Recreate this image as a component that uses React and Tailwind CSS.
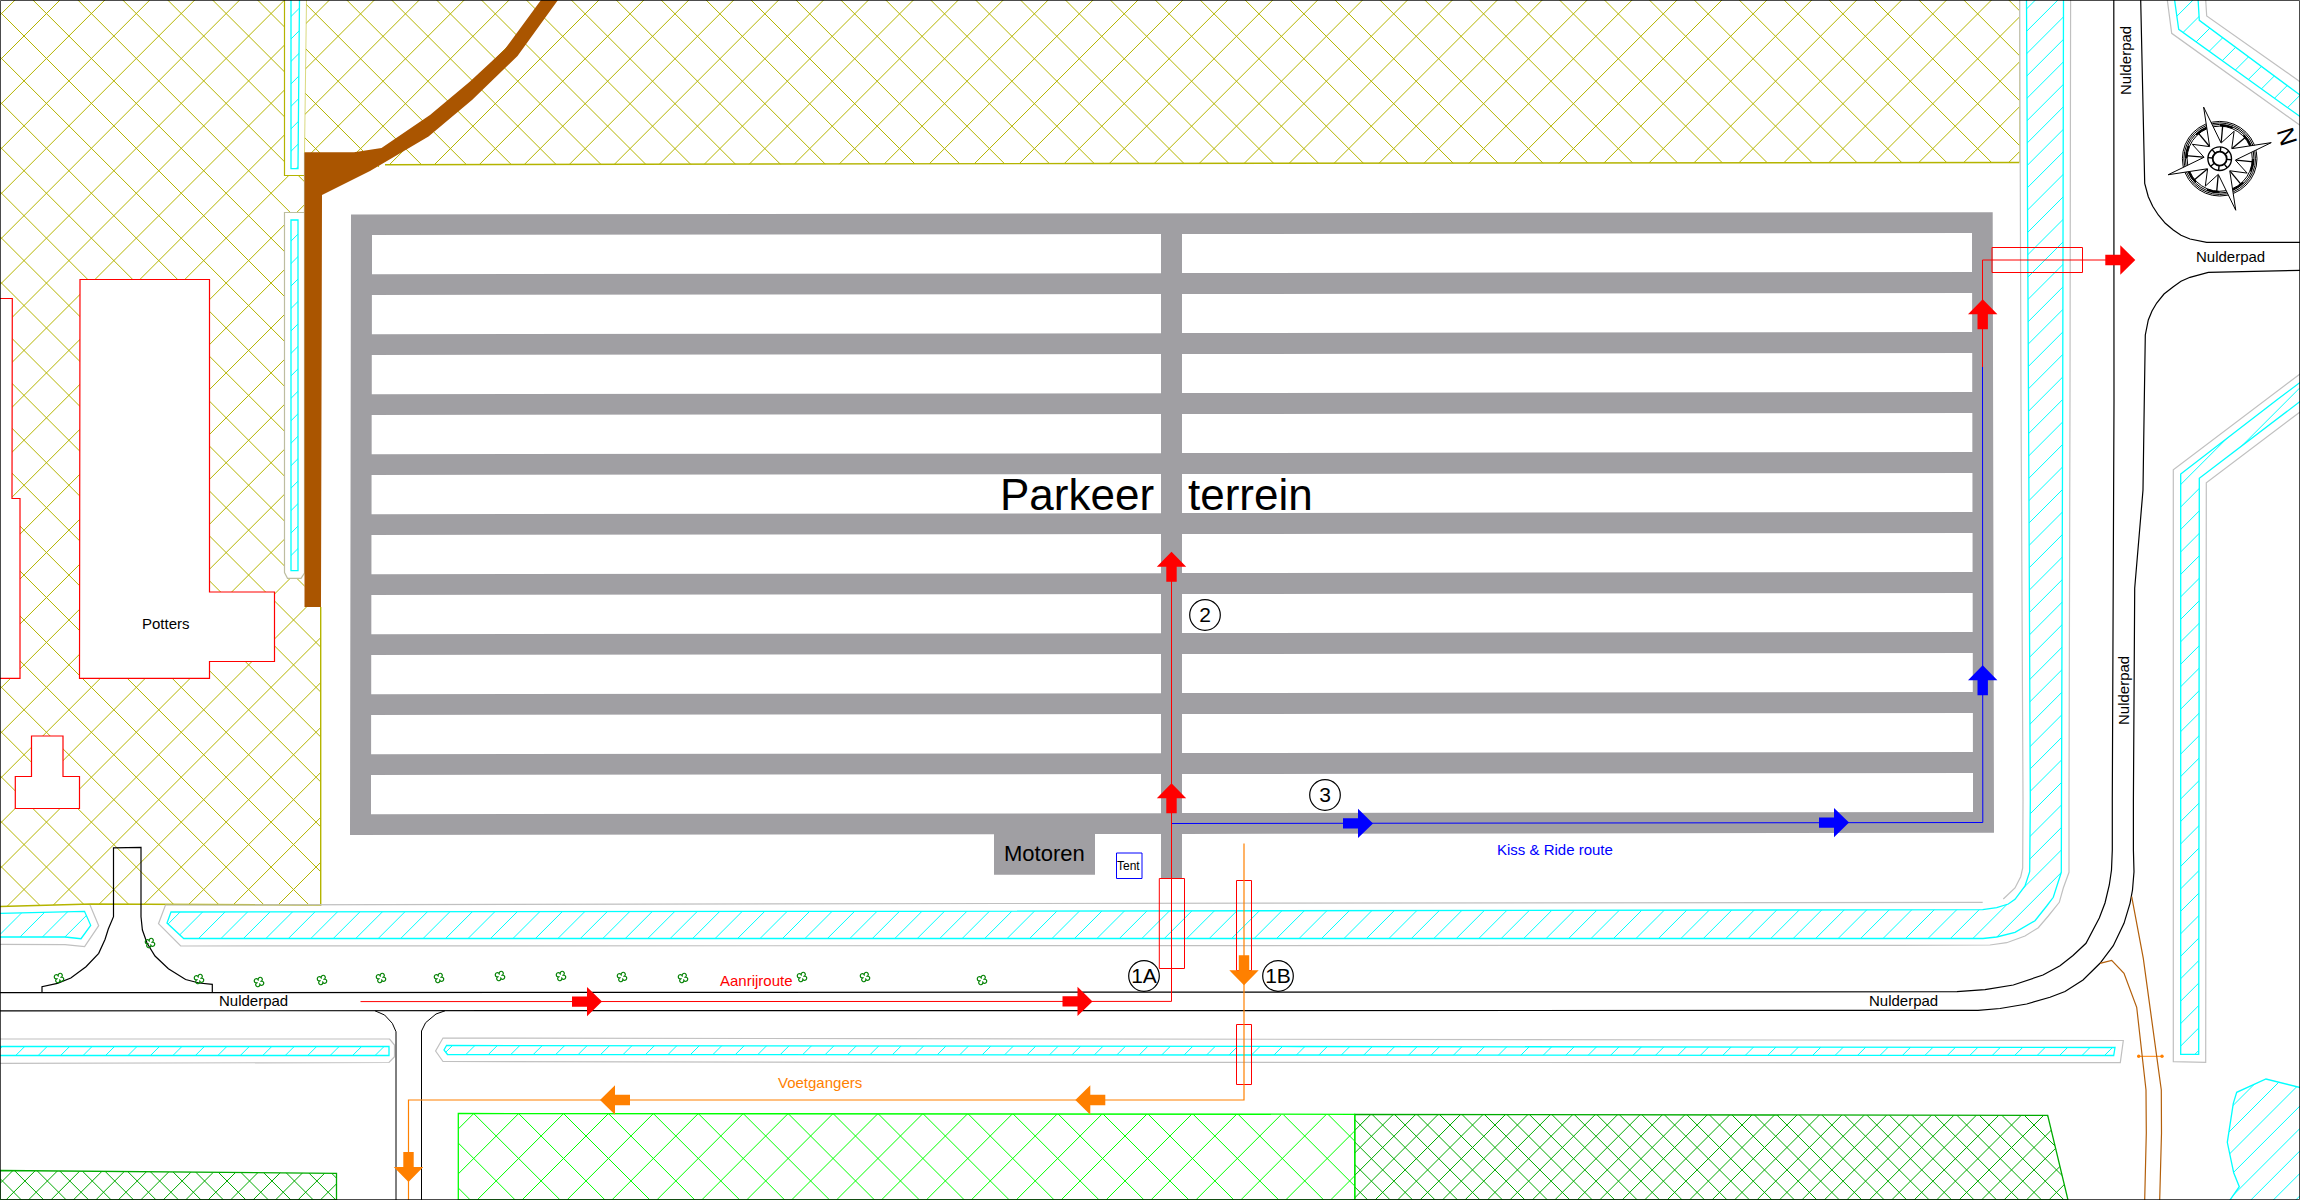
import React from "react";

const PITCH = 44.92;

/* Parallel 45° lines over a box: rising lines pass through (ax, ay), falling ones too when crossed. */
function hatchPath([x0, y0, x1, y1], [ax, ay], pitch, crossed) {
  let d = "";
  const sum = ax + ay;
  for (let k = Math.ceil((x0 + y0 - sum) / pitch); sum + k * pitch <= x1 + y1; k++) {
    const c = sum + k * pitch;
    d += `M${x0} ${c - x0}L${x1} ${c - x1}`;
  }
  if (crossed) {
    const diff = ax - ay;
    for (let k = Math.ceil((x0 - y1 - diff) / pitch); diff + k * pitch <= x1 - y0; k++) {
      const c = diff + k * pitch;
      d += `M${x0} ${x0 - c}L${x1} ${x1 - c}`;
    }
  }
  return d;
}

function Area({ id, shape, box, anchor, pitch, crossed = false, className, outline = true }) {
  return (
    <g className={className} fill="none">
      <clipPath id={id}>
        <path d={shape} clipRule="evenodd" />
      </clipPath>
      <path d={hatchPath(box, anchor, pitch, crossed)} clipPath={`url(#${id})`} />
      {outline && <path d={shape} strokeWidth="1.3" />}
    </g>
  );
}

const POTTERS = "M80 279.5H209.5V592H274.5V661.5H209.5V678.3H79.5Z";
const ANNEX = "M0 298.5H12.3L12 498.5H20V678.3H0";
const SHED = "M31.5 736H63V776.5H79.5V808.5H15.3V776.5H31.5Z";

function Fields() {
  return (
    <g>
      <Area
        id="field-west"
        className="stroke-[#b4b400]"
        outline={false}
        shape={`M0 0H284.5V175.5H304.5V212.5H284.5V572.5L287.5 578.3H301L304.5 573V607H320.7V905L91 904L0 906.5Z${POTTERS}${ANNEX}Z${SHED}`}
        box={[0, 0, 321, 907]}
        anchor={[24, 36]}
        pitch={PITCH}
        crossed
      />
      <Area
        id="field-north"
        className="stroke-[#b4b400]"
        outline={false}
        shape="M306.5 0L304.5 175H360L385 164.7L2019.5 162.5L2019 0Z"
        box={[304, 0, 2020, 176]}
        anchor={[1910.3, 36.3]}
        pitch={PITCH}
        crossed
      />
      <g fill="none" className="stroke-[#b4b400]">
        <path d="M320.7 607V905L91 904L0 906.5" strokeWidth="1.4" />
        <path d="M385 164.7L1100 163.5L2019.5 162.5" strokeWidth="1.4" />
        <path d="M284.5 0V175.5H304.5" strokeWidth="1.2" />
        <path d="M306.5 0L304.5 153M2019.5 0V162" opacity="0.5" />
      </g>
      <path
        fill="none"
        className="stroke-[#bdbda0]"
        strokeWidth="1.2"
        d="M304.5 212.5H284.5V572.5L287.5 578.3H301L304.5 573V153"
      />
      <Area
        id="meadow"
        className="stroke-[#00ff00]"
        shape="M458.3 1113.5L1354.7 1114.3V1200H458.3Z"
        box={[458, 1112, 1355, 1200]}
        anchor={[586, 1136]}
        pitch={PITCH}
        crossed
      />
      <Area
        id="wood-east"
        className="stroke-[#00aa00]"
        shape="M1354.7 1114.3L2047.7 1115.4L2068 1200H1354.7Z"
        box={[1354, 1112, 2068, 1200]}
        anchor={[1921.7, 1125]}
        pitch={PITCH / 2}
        crossed
      />
      <Area
        id="wood-west"
        className="stroke-[#00aa00]"
        shape="M0 1170.5L336.5 1173.3V1200H0Z"
        box={[0, 1170, 337, 1200]}
        anchor={[24.9, 1181]}
        pitch={PITCH / 2}
        crossed
      />
      <path d="M1354.7 1114V1200" className="stroke-[#00ff00]" />
    </g>
  );
}

const WATER = [
  { id: "w1", shape: "M291 -2H299.5L298 168.7H291Z", box: [290, 0, 300, 170], anchor: [307.5, 0] },
  { id: "w2", shape: "M291 220H298V570.7H291Z", box: [290, 220, 299, 571], anchor: [307.5, 0] },
  {
    id: "w3",
    shape: "M-2 913.5L84.5 911.3L90.7 925.3L81 938.7L65 937H-2Z",
    box: [0, 910, 92, 940],
    anchor: [934.5, 0],
  },
  {
    id: "w4",
    shape:
      "M171 912L167 923L183.7 938.5H1983L1996.7 937L2015 932.3L2035 920.7L2046.7 906L2053.3 897.3L2061.3 872.3L2061.5 800L2062.7 400L2063.5 -2H2026.5L2028.5 400L2030.3 800L2029.7 871.7L2025 886L2015 899.3L2008.3 904L1996.7 907.7L1982.7 909.7L900 911.3Z",
    box: [166, 0, 2064, 939],
    anchor: [1833.3, 0],
  },
  { id: "w5", shape: "M-2 1046.5H389V1055.5H-2Z", box: [0, 1046, 390, 1056], anchor: [1632.7, 0] },
  {
    id: "w6",
    shape: "M446.5 1045.5L444 1050L447.5 1054.5L2113.7 1055.5L2115 1047.5L1300 1046.5Z",
    box: [444, 1045, 2116, 1056],
    anchor: [1632.7, 0],
  },
  {
    id: "w7",
    shape: "M2302 381L2276.7 400L2180.7 474V1054.3H2198.7L2199.3 478.3L2302 400Z",
    box: [2180, 380, 2300, 1055],
    anchor: [2687.7, 0],
  },
  {
    id: "w8",
    shape: "M2174.3 -2L2178.7 29.3L2302 118V96.5L2199.3 20.3L2198 -2Z",
    box: [2174, 0, 2300, 118],
    anchor: [2238, 0],
  },
  {
    id: "w9",
    shape:
      "M2302 1088L2266 1079L2236.7 1092.3L2233.3 1103.3L2227.3 1142.3L2233.7 1172.7L2239.3 1186.7L2229.3 1201H2302Z",
    box: [2227, 1079, 2300, 1200],
    anchor: [3361, 0],
  },
];

const BANKS = [
  "M0 944.3L65 944.7L84.6 946.7L98.7 925.7L90 905",
  "M1982.7 902.3L1000 903.5L165.5 905L158.5 923.7L180.7 946L1900 945.3L1990 945L2006.7 942.7L2025 936L2038.3 927.7L2048.3 916L2059.3 902.3L2063.3 888L2069 872.3V800L2070 400L2070.6 0",
  "M2003.3 899L2015 888L2020.7 876.7L2022.7 868L2023 800L2021 400L2019.7 0",
  "M0 1039H389.6L394.5 1045V1056.7L389 1062.5L0 1063.3",
  "M2120.3 1062.7L2123.3 1040.5L900 1038.7L443 1038L435.6 1051L443 1061.5L900 1062.3Z",
  "M2300 374L2173.3 469.7V1061.7L2205.7 1062.3L2206.3 482.7L2300 412",
  "M2167.3 0L2171.7 33.3L2300 125.3",
  "M2205.7 0L2206.7 16L2300 81.7",
];

function Water() {
  return (
    <g>
      <g fill="none" className="stroke-[#c0c0c0]">
        {BANKS.map((d) => (
          <path key={d} d={d} strokeWidth="1.2" />
        ))}
      </g>
      {WATER.map((w) => (
        <Area key={w.id} {...w} pitch={PITCH / 2} className="stroke-[#00ffff]" />
      ))}
    </g>
  );
}

const ROADS = [
  "M0 992.7L1957 991.7L1985 989.7L2013.3 985L2043 975L2060 965.7L2073 955.5L2086 943.3L2099.3 918L2105 903L2109.3 885L2111.5 870L2112.3 850V800L2114 400L2113.8 0",
  "M0 1010.8L1957 1010.4H1978L2000 1008.5L2026.7 1004L2050 997.3L2065 991.5L2083 980L2100 963.3L2113.3 945.7L2124 923.3L2130 903.3L2132.5 890L2134 871.7L2133.4 850V800L2134.7 588.3L2143 490L2144.3 400L2145.3 335L2148.3 320L2152 311L2156.7 303L2164 294L2173.3 286.7L2181 281.3L2190 277.3L2208.3 272.3L2300 270.3",
  "M2140.7 0L2144.7 183.3L2148.3 196.7L2152.7 206.3L2158.3 215L2165.3 223.3L2173.3 230L2181 235.3L2190 239L2206.7 242.3H2300",
  "M42 992V986.7L57.4 983.3L70.8 978L86 966.7L98.7 953.3L105 939.5L108.3 929L113.5 916.7V847.8L141 847.3V916.7L142.4 930L147 943L155 956L168.4 968.7L185.6 979.5L199 983L212.3 984.3V992",
];

const SIDE_ROADS = [
  "M375 1010.8L384.6 1015L392.3 1023.3L396 1031.7V1200",
  "M445 1010.8L436 1014L425.6 1022.7L421.5 1031V1200",
];

function Roads() {
  return (
    <g fill="none" className="stroke-black">
      {ROADS.map((d) => (
        <path key={d} d={d} strokeWidth="1.2" />
      ))}
      {SIDE_ROADS.map((d) => (
        <path key={d} d={d} />
      ))}
    </g>
  );
}

const ROWS = [0, 1, 2, 3, 4, 5, 6, 7, 8, 9];

function ParkingLot() {
  return (
    <g>
      <path
        className="fill-[#a09fa3]"
        d="M351 214.5L1992.7 212.2L1994 832.7L1182 834V879H1161V834H1095V874.7H994V834.2L350 835Z"
      />
      {ROWS.map((i) => {
        const y = 60 * i;
        return (
          <path
            key={i}
            className="fill-white"
            d={`M${372 - i / 9} ${235 + y}L1161 ${234 + y}V${273.2 + y}L${372 - i / 9} ${274.2 + y}ZM1182 ${234 + y}L${1972 + i / 9} ${233 + y}V${272 + y}L1182 ${273 + y}Z`}
          />
        );
      })}
    </g>
  );
}

const TREES = [
  [59, 978], [150, 943], [199, 979], [259, 982], [322, 980], [381, 978], [439, 978],
  [500, 976], [561, 976], [622, 977], [683, 978], [802, 977], [865, 977], [982, 980],
];

function Trees() {
  return (
    <g fill="none" className="stroke-[#008000]">
      {TREES.map(([x, y]) => (
        <path
          key={x}
          transform={`translate(${x} ${y}) rotate(-20)`}
          strokeWidth="1.2"
          d="M0 -1.6A2.1 2.1 0 1 1 1.6 0A2.1 2.1 0 1 1 0 1.6A2.1 2.1 0 1 1 -1.6 0A2.1 2.1 0 1 1 0 -1.6Z"
        />
      ))}
    </g>
  );
}

const polar = (r, deg) => {
  const a = (deg * Math.PI) / 180;
  return `${(r * Math.cos(a)).toFixed(2)} ${(r * Math.sin(a)).toFixed(2)}`;
};

const VALLEYS = [0, 1, 2, 3, 4, 5, 6, 7].map((k) => -84.8 + 45 * k);

function Compass() {
  const star = [0, 1, 2, 3]
    .map(
      (k) =>
        `${k ? "L" : "M"}${polar(54, -107.3 + 90 * k)}L${polar(15.7, -84.8 + 90 * k)}L${polar(31, -62.3 + 90 * k)}L${polar(15.7, -39.8 + 90 * k)}`
    )
    .join("");
  return (
    <g transform="translate(2219.7 158.7)" fill="none" className="stroke-black">
      <circle r="37.3" />
      <circle r="35.8" />
      <circle r="34.3" />
      <circle r="32.6" />
      <circle r="33.5" strokeWidth="1.8" strokeDasharray="13.15 13.15" />
      <path d={`${star}Z`} className="fill-white" strokeWidth="1" />
      {VALLEYS.map((a) => (
        <path key={a} strokeWidth="1.3" d={`M${polar(16.5, a)}L${polar(34, a)}`} />
      ))}
      <circle r="11.8" strokeWidth="1.4" />
      <circle r="7" strokeWidth="1.8" />
      {VALLEYS.map((a) => (
        <path key={a} strokeWidth="1.4" d={`M${polar(7, a)}L${polar(11.8, a)}`} />
      ))}
    </g>
  );
}

/* Block arrow whose tip sits at (x, y); angle 0 points right. */
function Arrow({ x, y, angle, className }) {
  return (
    <path
      className={className}
      transform={`translate(${x} ${y}) rotate(${angle})`}
      d="M0 0L-15 -14.7V-5.2H-30V5.2H-15V14.7Z"
    />
  );
}

function Routes() {
  return (
    <g>
      <g fill="none">
        <path className="stroke-[#ff0000]" d={`${POTTERS}${ANNEX}${SHED}`} strokeWidth="1.2" />
        <path
          className="stroke-[#ff0000]"
          d="M1159.3 878.5H1184.5V968.5H1159.3ZM1236.5 880.5H1251.5V970.5H1236.5ZM1236.5 1024.5H1251.5V1084.5H1236.5ZM1992 247.5H2082.5V272.5H1992Z"
        />
        <path className="stroke-[#0000ff]" d="M1171.5 823.5L1982.8 822.5L1982.5 367" />
        <path
          className="stroke-[#ff0000]"
          d="M360.5 1001.6L1171.5 1001.4V580M1982.5 367V260H2107"
        />
        <path className="stroke-[#ff8000]" strokeWidth="1.2" d="M1244 843.5V1100H408.5V1200" />
        <path className="stroke-[#ff8000]" d="M2138.7 1056.3H2162" />
        <path
          className="stroke-[#b35f0a]"
          strokeWidth="1.2"
          d="M2131.7 896.7L2143.3 958.3L2161.3 1090L2161.5 1133L2159.7 1200M2100 963.3L2111.7 960.3L2124 973.3L2136.7 1007.3L2146 1090L2146.3 1133L2144.7 1200"
        />
      </g>
      <g className="fill-[#ff8000]">
        <circle cx="2138.7" cy="1056.3" r="1.7" />
        <circle cx="2162" cy="1056.2" r="1.7" />
      </g>
      <Arrow className="fill-[#ff0000]" x={602} y={1001.6} angle={0} />
      <Arrow className="fill-[#ff0000]" x={1092.5} y={1001.4} angle={0} />
      <Arrow className="fill-[#ff0000]" x={2135.3} y={260} angle={0} />
      <Arrow className="fill-[#ff0000]" x={1171.5} y={551.7} angle={-90} />
      <Arrow className="fill-[#ff0000]" x={1171.5} y={783.3} angle={-90} />
      <Arrow className="fill-[#ff0000]" x={1982.7} y={299.3} angle={-90} />
      <Arrow className="fill-[#0000ff]" x={1982.7} y={665.3} angle={-90} />
      <Arrow className="fill-[#0000ff]" x={1373} y={823.4} angle={0} />
      <Arrow className="fill-[#0000ff]" x={1849} y={822.6} angle={0} />
      <Arrow className="fill-[#ff8000]" x={1075.3} y={1100} angle={180} />
      <Arrow className="fill-[#ff8000]" x={600} y={1100} angle={180} />
      <Arrow className="fill-[#ff8000]" x={1244} y={985.3} angle={90} />
      <Arrow className="fill-[#ff8000]" x={408.5} y={1182} angle={90} />
    </g>
  );
}

const MARKERS = [
  { label: "2", x: 1205, y: 615 },
  { label: "3", x: 1325, y: 795 },
  { label: "1A", x: 1144, y: 976 },
  { label: "1B", x: 1278, y: 976 },
];

function Labels() {
  return (
    <g className="fill-black text-[15px]">
      <text x="142" y="629">Potters</text>
      <text x="219" y="1006">Nulderpad</text>
      <text x="1869" y="1006">Nulderpad</text>
      <text x="2196" y="262">Nulderpad</text>
      <text transform="translate(2131 95) rotate(-90)">Nulderpad</text>
      <text transform="translate(2129 725) rotate(-90)">Nulderpad</text>
      <text x="720" y="986" className="fill-[#ff0000]">Aanrijroute</text>
      <text x="778" y="1088" className="fill-[#ff8000]">Voetgangers</text>
      <text x="1497" y="855" className="fill-[#0000ff]">Kiss &amp; Ride route</text>
      <text x="1004" y="861" className="text-[22px]">Motoren</text>
      <text x="1117" y="870" className="text-[12px]">Tent</text>
      <path d="M1116.5 853H1142V878.5H1116.5Z" fill="none" className="stroke-[#0000ff]" />
      <text x="1000" y="510" className="text-[44px]">Parkeer</text>
      <text x="1188" y="510" className="text-[44px]">terrein</text>
      {MARKERS.map((m) => (
        <g key={m.label}>
          <circle cx={m.x} cy={m.y} r="15.3" fill="none" strokeWidth="1.2" className="stroke-black" />
          <text x={m.x} y={m.y + 7} textAnchor="middle" className="text-[21px]">
            {m.label}
          </text>
        </g>
      ))}
      <text
        transform="translate(2279 139) rotate(72.5)"
        textAnchor="middle"
        className="text-[24px]"
      >
        N
      </text>
    </g>
  );
}

export default function App() {
  return (
    <main className="w-full bg-white font-['Liberation_Sans',Arial,sans-serif]">
      <svg
        viewBox="0 0 2300 1200"
        className="block h-auto w-full"
        role="img"
        aria-label="Parkeerterrein Nulderpad"
      >
        <Fields />
        <Water />
        <path
          className="fill-[#aa5500]"
          d="M541 0L505 49L470 81.5L430 115L381.5 148L354 152.3H304.5V607H321L322 195L370 171L428.5 136.5L472 100L517.5 56L558 0Z"
        />
        <Roads />
        <Trees />
        <ParkingLot />
        <Routes />
        <Compass />
        <Labels />
        <path d="M0.5 0.5H2299.5V1199.5H0.5Z" fill="none" className="stroke-black" opacity="0.7" />
      </svg>
    </main>
  );
}
